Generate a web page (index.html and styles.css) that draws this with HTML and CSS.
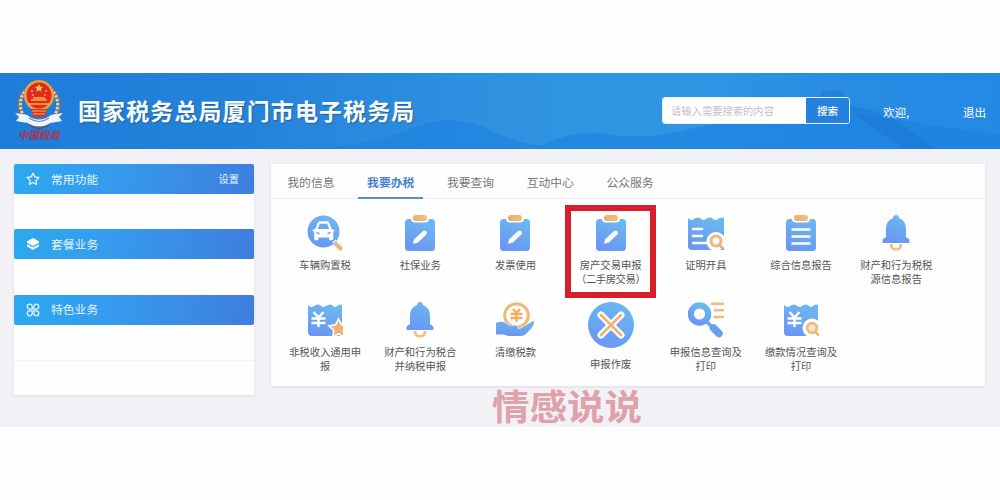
FILE: index.html
```
<!DOCTYPE html>
<html lang="zh-CN">
<head>
    <meta charset="UTF-8">
    <title>国家税务总局厦门市电子税务局</title>
    <link rel="stylesheet" href="styles.css">
</head>
<body>
<svg class="defs" width="0" height="0">
    <defs>
        <linearGradient id="blue" x1="0.7" y1="0" x2="0.3" y2="1">
            <stop offset="0" stop-color="#6cb8f0"/>
            <stop offset="1" stop-color="#6996f3"/>
        </linearGradient>
        <linearGradient id="orange" x1="0" y1="0" x2="1" y2="0">
            <stop offset="0" stop-color="#efad68"/>
            <stop offset="1" stop-color="#f6bf83"/>
        </linearGradient>
    </defs>
    <symbol id="i-car" viewBox="0 0 36 36">
        <path d="M26 26l7.500 7.500" stroke="#efb57c" stroke-width="4" stroke-linecap="round"/>
        <circle cx="16.500" cy="16.500" r="16" fill="url(#blue)"/>
        <path d="M26 28l3-3" stroke="#fff" stroke-width="1.500"/>
        <path d="M5 15.500l3.500-2 2.200-5.500q.6-1.800 2.300-1.800h7q1.700 0 2.300 1.800l2.200 5.500 3.500 2-1.700 1.200v7q0 1.500-1.500 1.500h-1.500q-1.300 0-1.300-1.500v-1.200H11.500v1.200q0 1.500-1.300 1.500H8.700q-1.500 0-1.500-1.500v-7z" fill="#fff"/>
        <path d="M12.800 8.800h7.400l2 5.200H10.800z" fill="#6ba7f3"/>
        <path d="M9.500 17.500l3 1.200M23.500 17.500l-3 1.200" stroke="#6ba0f3" stroke-width="1.500"/>
    </symbol>
    <symbol id="i-edit" viewBox="0 0 36 36">
        <rect x="3" y="4" width="30" height="32" rx="3.500" fill="url(#blue)"/>
        <rect x="9" y="-2" width="18" height="9.500" rx="4" fill="#fff"/>
        <rect x="11" y="0" width="14" height="6" rx="2.800" fill="url(#orange)"/>
        <path d="M14.500 25.500l8-7.500" stroke="#fff" stroke-width="4.800" stroke-linecap="round"/>
        <path d="M11 28.700l1.200-5.200 3.800 4z" fill="#fff"/>
    </symbol>
    <symbol id="i-list" viewBox="0 0 36 36">
        <rect x="3" y="4" width="30" height="32" rx="3.500" fill="url(#blue)"/>
        <rect x="9" y="-2" width="18" height="9.500" rx="4" fill="#fff"/>
        <rect x="11" y="0" width="14" height="6" rx="2.800" fill="url(#orange)"/>
        <path d="M9.500 14.500h17M9.500 21.500h17M9.500 28.500h17" stroke="#fff" stroke-width="2.400" stroke-linecap="round"/>
    </symbol>
    <symbol id="i-cert" viewBox="0 0 36 36">
        <path d="M0 3q3 3.500 6 1t6-1q3 3.500 6 1t6-1q3 3.500 6 1t6-1v32H4q-4 0-4-4z" fill="url(#blue)"/>
        <path d="M5 14h9M5 21h9M5 28h14" stroke="#fff" stroke-width="2.400" stroke-linecap="round"/>
        <circle cx="28" cy="26.500" r="9.500" fill="#fff"/>
        <circle cx="28" cy="26" r="5" fill="none" stroke="#f0b477" stroke-width="3"/>
        <path d="M31 29.500l3 3" stroke="#f0b477" stroke-width="3" stroke-linecap="round"/>
    </symbol>
    <symbol id="i-bell" viewBox="0 0 36 36">
        <path d="M13 29q0 5.500 5 5.500t5-5.500" fill="none" stroke="#f2bc85" stroke-width="2.600"/>
        <path d="M18 0q2.500 0 3 3 7 2.500 7 11v8l3.500 2.500v3.500H4.500v-3.500L8 22v-8q0-8.500 7-11 .5-3 3-3z" fill="url(#blue)"/>
    </symbol>
    <symbol id="i-taxstar" viewBox="0 0 36 36">
        <path d="M1 3q3 3.500 6 1t6-1q3 3.500 6 1t6-1q3 3.500 5 1t5-1v31H5q-4 0-4-4z" fill="url(#blue)"/>
        <path d="M6.500 10l5 5.500 5-5.500M4.500 16.500h14M4.500 21h14M11.500 15v10" fill="none" stroke="#fff" stroke-width="2.500"/>
        <path d="M31.500 18.500l2.600 5 5.500.8-4 3.900 1 5.500-5.100-2.600-4.900 2.600.9-5.500-4-3.900 5.500-.8z" fill="#f2b277" stroke="#fff" stroke-width="3" paint-order="stroke"/>
    </symbol>
    <symbol id="i-hand" viewBox="0 0 38 36">
        <circle cx="20.500" cy="13.500" r="11.800" fill="#fff" stroke="#f2b877" stroke-width="3"/>
        <path d="M17 7l3.500 4L24 7M14.500 12h12M14.500 16h12M20.500 11v9" fill="none" stroke="#f0ad66" stroke-width="2.400"/>
        <path d="M0 21q6-2.500 10 .3l3 2.200h7q2.500.5 1.500 3h3L36 19.500q3-1 2.500 1.500-3 6.500-8 10.500-2.500 2.500-6 2.500H12Q9 32 5 32.500H0z" fill="url(#blue)" stroke="#fff" stroke-width="1.200" paint-order="stroke"/>
    </symbol>
    <symbol id="i-void" viewBox="0 0 46 46">
        <circle cx="23" cy="23" r="23" fill="url(#blue)"/>
        <path d="M13 13l20 20M33 13L13 33" stroke="#fff" stroke-width="7" stroke-linecap="round"/>
        <path d="M13 13l20 20M33 13L13 33" stroke="#efb36f" stroke-width="2.600" stroke-linecap="round"/>
    </symbol>
    <symbol id="i-search" viewBox="0 0 36 36">
        <path d="M18 19l5 5" stroke="#6b9ff3" stroke-width="3.500"/>
        <path d="M25.500 26l5.500 5.500" stroke="#6b9df3" stroke-width="7.500" stroke-linecap="round"/>
        <circle cx="11.500" cy="12" r="8.700" fill="none" stroke="url(#blue)" stroke-width="6.200"/>
        <path d="M24 1.800h11M27 8.300h8M26.500 15h8.500" stroke="#f2b981" stroke-width="2.600" stroke-linecap="round"/>
    </symbol>
    <symbol id="i-taxcheck" viewBox="0 0 36 36">
        <path d="M1 3q3 3.500 6 1t6-1q3 3.500 6 1t6-1q3 3.500 5 1t5-1v31H5q-4 0-4-4z" fill="url(#blue)"/>
        <path d="M6.500 10l5 5.500 5-5.500M4.500 16.500h14M4.500 21h14M11.500 15v10" fill="none" stroke="#fff" stroke-width="2.500"/>
        <circle cx="29" cy="26" r="9.500" fill="#fff"/>
        <circle cx="29" cy="26" r="4.800" fill="#fbe3c4" stroke="#f1b97c" stroke-width="2.800"/>
        <path d="M32 29.500l3 3" stroke="#f1b97c" stroke-width="2.800" stroke-linecap="round"/>
    </symbol>
</svg>

<div class="page">
    <div class="header">
        <svg class="emblem" viewBox="0 0 50 62">
            <path d="M18 7Q3 13 6 30q3 11 16 14M32 7q15 6 12 23-3 11-16 14" fill="none" stroke="#66758a" stroke-width="5"/>
            <path d="M17 7Q4 14 7 30q3 9 13 13M33 7q13 7 10 23-3 9-13 13" fill="none" stroke="#dfd3ae" stroke-width="3" stroke-dasharray="2.500 1.500"/>
            <ellipse cx="25" cy="15.500" rx="15" ry="15.500" fill="#eda13c"/>
            <ellipse cx="25" cy="15.500" rx="12.500" ry="13" fill="#df2a20"/>
            <path d="M25 4l1.200 2.600 2.800.3-2 2 .5 2.800-2.500-1.400-2.500 1.400.5-2.800-2-2 2.800-.3z" fill="#f7c64d"/>
            <path d="M17 11h2M31 11h2M18 15h2M30 15h2M17 20h16M19 18h12M15 24h20" stroke="#f5b047" stroke-width="1.600"/>
            <path d="M17 29h16l-2 8H19z" fill="#d33527"/>
            <path d="M18 31h14M19 34h12" stroke="#f1b24a" stroke-width="1"/>
            <path d="M1 33l12 2q12 9 24 0l12-2-4 4 3 4-11 2q-12 9-24 0L2 41l3-4z" fill="#edf4fa"/>
            <path d="M12 42q13 9 26 0l-5 5-8 3-8-3z" fill="#435d83"/>
            <path d="M15 38q10 7 20 0" fill="none" stroke="#7689a4" stroke-width="1.200"/>
            <text class="emblem-text" x="25" y="58.500" text-anchor="middle">中国税务</text>
        </svg>
        <h1 class="title">国家税务总局厦门市电子税务局</h1>
        <div class="search">
            <span class="search-input">请输入需要搜索的内容</span>
            <span class="search-btn">搜索</span>
        </div>
        <span class="welcome">欢迎,</span>
        <span class="logout">退出</span>
    </div>

    <div class="content">
        <div class="sidebar">
            <div class="side-head">
                <svg class="side-icon" viewBox="0 0 14 14"><path d="M7 1.200l1.800 3.700 4.100.6-3 2.900.7 4L7 10.500l-3.600 1.900.7-4-3-2.900 4.100-.6z" fill="none" stroke="#e4f5ff" stroke-width="1.300" stroke-linejoin="round"/></svg>
                <span>常用功能</span>
                <span class="setting">设置</span>
            </div>
            <div class="side-body"></div>
            <div class="side-head">
                <svg class="side-icon" viewBox="0 0 14 14"><path d="M7 1l6 3.300v1.400L7 9 1 5.700V4.300z" fill="#fff"/><path d="M1 7l6 3.300L13 7v2.500L7 13 1 9.500z" fill="#e2f1fe"/></svg>
                <span>套餐业务</span>
            </div>
            <div class="side-body"></div>
            <div class="side-head">
                <svg class="side-icon" viewBox="0 0 14 14"><g fill="none" stroke="#e0f3ff" stroke-width="1.300"><path d="M6.200 6.200H3.500A2.500 2.500 0 1 1 6.200 3.500zM7.800 6.200V3.500a2.500 2.500 0 1 1 2.700 2.700zM6.200 7.800v2.700a2.500 2.500 0 1 1-2.700-2.700zM7.800 7.800h2.700a2.500 2.500 0 1 1-2.700 2.700z"/></g></svg>
                <span>特色业务</span>
            </div>
            <div class="side-body"></div>
            <div class="side-body last"></div>
        </div>

        <div class="main">
            <ul class="tabs">
                <li>我的信息</li>
                <li class="active">我要办税</li>
                <li>我要查询</li>
                <li>互动中心</li>
                <li>公众服务</li>
            </ul>
            <ul class="apps">
                <li><svg class="icon"><use href="#i-car"/></svg><p>车辆购置税</p></li>
                <li><svg class="icon"><use href="#i-edit"/></svg><p>社保业务</p></li>
                <li><svg class="icon"><use href="#i-edit"/></svg><p>发票使用</p></li>
                <li class="marked"><svg class="icon"><use href="#i-edit"/></svg><p>房产交易申报<br><span class="sub">（二手房交易）</span></p></li>
                <li><svg class="icon"><use href="#i-cert"/></svg><p>证明开具</p></li>
                <li><svg class="icon"><use href="#i-list"/></svg><p>综合信息报告</p></li>
                <li><svg class="icon"><use href="#i-bell"/></svg><p>财产和行为税税<br>源信息报告</p></li>
                <li><svg class="icon"><use href="#i-taxstar"/></svg><p>非税收入通用申<br>报</p></li>
                <li><svg class="icon"><use href="#i-bell"/></svg><p>财产和行为税合<br>并纳税申报</p></li>
                <li><svg class="icon wide"><use href="#i-hand"/></svg><p>清缴税款</p></li>
                <li><svg class="icon big"><use href="#i-void"/></svg><p>申报作废</p></li>
                <li><svg class="icon"><use href="#i-search"/></svg><p>申报信息查询及<br>打印</p></li>
                <li><svg class="icon"><use href="#i-taxcheck"/></svg><p>缴款情况查询及<br>打印</p></li>
            </ul>
        </div>
        <div class="watermark">情感说说</div>
    </div>
</div>
</body>
</html>
```
FILE: styles.css
```
*{
    margin: 0;
    padding: 0;
    box-sizing: border-box;
}
ul{
    list-style: none;
}
body{
    background-color: #fefefe;
    font-family: "Noto Sans CJK SC", "Liberation Sans", sans-serif;
    color: #555;
}
.defs{
    position: absolute;
}
.page{
    width: 1000px;
    padding-top: 73px;
}

/* header */
.header{
    height: 76px;
    display: flex;
    align-items: center;
    padding-left: 14px;
    color: #fff;
    background: url("data:image/svg+xml,%3Csvg xmlns='http://www.w3.org/2000/svg' width='1000' height='76'%3E%3Cpath d='M310 76Q370 72 400 60Q430 47 450 47Q475 48 495 60Q520 70 540 73Q570 58 600 60Q640 68 680 58Q740 44 790 44L850 40Q930 52 1000 62V76Z' fill='%231c80df' fill-opacity='.6'/%3E%3Cpath d='M821 18h23v12h-23zM845 34Q870 32 900 50L935 76H905Q870 54 845 34z' fill='%231873cd' fill-opacity='.4'/%3E%3C/svg%3E"), linear-gradient(90deg, #1e7dd9 0%, #2382db 24%, #2e92e1 50%, #3096e3 68%, #288ce4 85%, #2389e3 100%);
}
.emblem{
    width: 50px;
    height: 62px;
    overflow: visible;
}
.emblem-text{
    font-size: 10.5px;
    font-weight: 900;
    font-style: italic;
    fill: #963d68;
}
.title{
    width: 338px;
    margin: 0 0 2px 14px;
    font-size: 23px;
    line-height: 30px;
    font-weight: 700;
    letter-spacing: 1.1px;
    white-space: nowrap;
    color: #f4fcff;
    text-shadow: 1px 1px 1px #315f85;
}
.search{
    width: 188px;
    height: 27px;
    margin: 0 0 1px 246px;
    display: flex;
    border: 1px solid #e5f3ff;
    border-radius: 3px;
    overflow: hidden;
    line-height: 26px;
}
.search-input{
    width: 143px;
    padding-left: 8px;
    background-color: #fff;
    color: #bfbfc3;
    font-size: 10.3px;
}
.search-btn{
    flex: 1;
    text-align: center;
    font-size: 10.5px;
    font-weight: 500;
    background-color: #2681dc;
}
.welcome,.logout{
    font-size: 11.5px;
    white-space: nowrap;
    padding-top: 2px;
}
.welcome{
    width: 80px;
    margin-left: 33px;
}

/* content */
.content{
    position: relative;
    height: 278px;
    padding: 15px 14px;
    display: flex;
    align-items: flex-start;
    gap: 17px;
    background-color: #f1f1f6;
}
.sidebar{
    width: 240px;
    box-shadow: 0 1px 3px #dedee3;
}
.side-head{
    height: 30px;
    display: flex;
    align-items: center;
    padding: 0 15px 0 12px;
    border-radius: 2px;
    background: linear-gradient(100deg, #2ba9ee 0%, #359bef 40%, #3f7ddf 100%);
    color: #e5f5ff;
    font-size: 11.8px;
}
.side-head span{
    margin-bottom: 2px;
}
.side-icon{
    width: 14px;
    height: 14px;
    margin-right: 11px;
}
.side-head .setting{
    margin-left: auto;
    font-size: 10.3px;
}
.side-body{
    height: 35.3px;
    background-color: #fefefe;
}
.side-body.last{
    border-top: 1px solid #f4f4f6;
}
.main{
    width: 714px;
    height: 222px;
    background-color: #fefefe;
    box-shadow: 0 1px 3px #dedee3;
}
.tabs{
    height: 35px;
    display: flex;
    border-bottom: 1px solid #ebecf0;
    font-size: 11.8px;
    line-height: 35px;
    color: #777;
}
.tabs li{
    width: 79.8px;
    height: 35px;
    text-align: center;
}
.tabs .active{
    width: 65px;
    margin: 0 7.4px;
    border-bottom: 2px solid #5b8cc9;
    color: #4a82d0;
    font-weight: 700;
}
.apps{
    display: grid;
    grid-template-columns: repeat(7, 95.2px);
    grid-template-rows: 86.5px 85px;
    padding: 16px 0 0 6.5px;
}
.apps li{
    position: relative;
    display: flex;
    flex-direction: column;
    align-items: center;
}
.icon{
    width: 36px;
    height: 36px;
    overflow: visible;
}
.icon.wide{
    width: 38px;
}
.icon.big{
    width: 46px;
    height: 46px;
}
.apps p{
    margin-top: 7.4px;
    font-size: 10.3px;
    line-height: 14px;
    text-align: center;
    white-space: nowrap;
}
.sub{
    letter-spacing: -0.4px;
}
.icon.big + p{
    margin-top: 9px;
}
.marked::after{
    content: "";
    position: absolute;
    left: 2px;
    top: -10px;
    width: 91px;
    height: 93px;
    box-sizing: border-box;
    border: 6px solid #d71f2c;
}
.watermark{
    position: absolute;
    left: 492px;
    top: 235px;
    font-size: 37.5px;
    line-height: 42px;
    font-weight: 700;
    color: #dfa2ab;
    transform: scaleY(0.93);
}
```
